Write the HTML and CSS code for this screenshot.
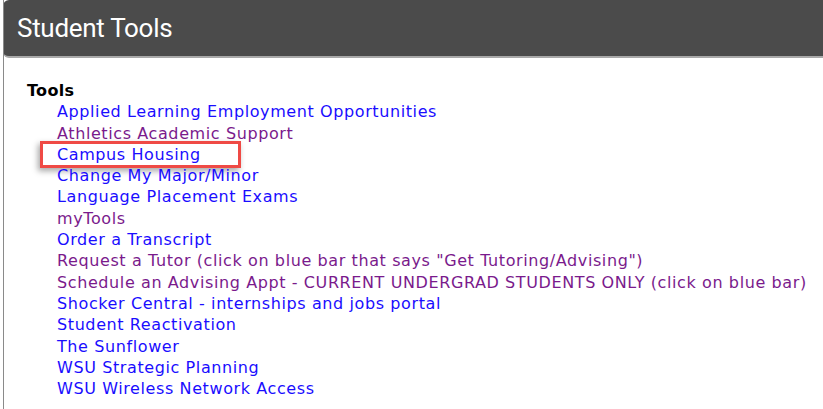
FILE: index.html
```html
<!DOCTYPE html>
<html>
<head>
<meta charset="utf-8">
<link rel="stylesheet" href="styles.css">
</head>
<body>
<div class="panel">
  <div class="panel-header"><h1 class="panel-title">Student Tools</h1></div>
  <div class="panel-body">
    <div class="group-title">Tools</div>
    <ul class="tool-list">
      <li><a class="link" href="#">Applied Learning Employment Opportunities</a></li>
      <li><a class="link visited" href="#">Athletics Academic Support</a></li>
      <li class="highlighted"><a class="link" href="#">Campus Housing</a><span class="callout"></span></li>
      <li><a class="link" href="#">Change My Major/Minor</a></li>
      <li><a class="link" href="#">Language Placement Exams</a></li>
      <li><a class="link visited" href="#">myTools</a></li>
      <li><a class="link" href="#">Order a Transcript</a></li>
      <li><a class="link visited" href="#">Request a Tutor (click on blue bar that says "Get Tutoring/Advising")</a></li>
      <li><a class="link visited" href="#">Schedule an Advising Appt - CURRENT UNDERGRAD STUDENTS ONLY (click on blue bar)</a></li>
      <li><a class="link" href="#">Shocker Central - internships and jobs portal</a></li>
      <li><a class="link" href="#">Student Reactivation</a></li>
      <li><a class="link" href="#">The Sunflower</a></li>
      <li><a class="link" href="#">WSU Strategic Planning</a></li>
      <li><a class="link" href="#">WSU Wireless Network Access</a></li>
    </ul>
  </div>
</div>
</body>
</html>
```
FILE: styles.css
```css
html, body {
  margin: 0;
  padding: 0;
  background: #ffffff;
}
.panel {
  margin-left: 3px;
  border-left: 1px solid #8a8a8a;
  height: 409px;
  overflow: hidden;
}
.panel-header {
  height: 56px;
  background: #4b4b4b;
  border-bottom: 2px solid #a9a9a9;
  border-radius: 6px 0 0 6px;
  margin-left: -1px;
  display: flex;
  align-items: center;
  padding-left: 14px;
}
.panel-title {
  margin: 0;
  font-family: Roboto, "Liberation Sans", sans-serif;
  font-weight: 400;
  font-size: 26px;
  letter-spacing: -0.3px;
  color: #ffffff;
}
.panel-body {
  padding: 22px 0 0 23px;
  font-family: "DejaVu Sans", Verdana, sans-serif;
  font-size: 16px;
  line-height: 21.3px;
  letter-spacing: 0.6px;
}
.group-title {
  font-weight: 700;
  color: #000000;
  letter-spacing: 0.3px;
}
.tool-list {
  list-style: none;
  margin: 0;
  padding: 0 0 0 30px;
}
.tool-list li {
  position: relative;
  white-space: nowrap;
}
.link {
  color: #1a0dff;
  text-decoration: none;
}
.link.visited {
  color: #7a1a8c;
}
.callout {
  position: absolute;
  left: -17px;
  top: -3px;
  width: 195px;
  height: 21px;
  border: 3px solid #ef4a45;
  box-shadow: -2px 3px 6px rgba(0,0,0,0.35);
  pointer-events: none;
}
```
